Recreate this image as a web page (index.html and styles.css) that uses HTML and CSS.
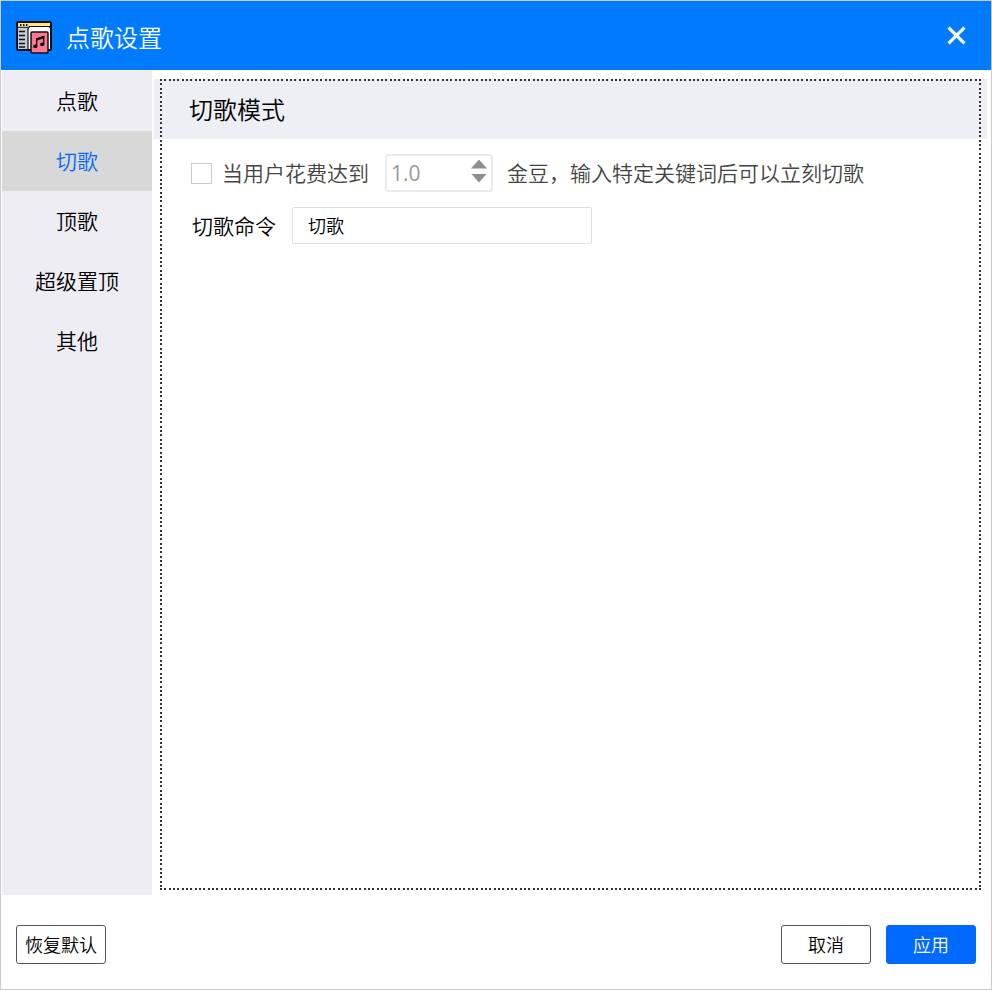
FILE: index.html
```html
<!DOCTYPE html>
<html lang="zh-CN">
<head>
<meta charset="utf-8">
<title>点歌设置</title>
<link rel="stylesheet" href="styles.css">
</head>
<body>
<div class="window">
  <header class="titlebar">
    <svg class="logo" viewBox="0 0 36 33" aria-hidden="true">
      <rect x="1" y="1" width="34" height="28" rx="1" fill="#fff" stroke="#111" stroke-width="2"/>
      <path d="M2 2h32v4H2z" fill="#ffe783"/>
      <path d="M2 6h10v22H2z" fill="#c6cbd9"/>
      <path d="M1 6.300h34" stroke="#111" stroke-width="1"/>
      <path d="M4 4h1.500M7 4h1.500M10 4h1.500" stroke="#111" stroke-width="2"/>
      <path d="M12 28V7.500l1.500-2.500H31l3 2.500V28z" fill="#fff"/>
      <path d="M12 28V8l1.500-2.500H34" fill="none" stroke="#111" stroke-width="1.200"/>
      <path d="M3 10.500h6M3 14.500h6M3 18.500h6M3 22.500h6M3 26h6" stroke="#111" stroke-width="1.300"/>
      <rect x="15" y="11" width="17" height="21" rx="1" fill="#ff7892" stroke="#111" stroke-width="1.500"/>
      <path d="M20.700 25v-7l7-2.500v7.500" fill="none" stroke="#111" stroke-width="1.300"/>
      <path d="M20 17.500l8.300-2.500v2.200l-8.300 2.500z" fill="#111"/>
      <ellipse cx="19.200" cy="25.300" rx="2.200" ry="1.900" fill="#111"/>
      <ellipse cx="26.200" cy="23.300" rx="2.200" ry="1.900" fill="#111"/>
    </svg>
    <h1 class="title">点歌设置</h1>
    <button class="close" type="button" aria-label="关闭">
      <svg viewBox="0 0 18 18" aria-hidden="true"><path d="M1.500 1.500l15 15M16.500 1.500l-15 15" fill="none" stroke="#fff" stroke-width="3"/></svg>
    </button>
  </header>
  <div class="main">
    <nav class="sidebar">
      <a class="tab" href="#song">点歌</a>
      <a class="tab active" href="#skip" aria-current="page">切歌</a>
      <a class="tab" href="#top">顶歌</a>
      <a class="tab" href="#super">超级置顶</a>
      <a class="tab" href="#other">其他</a>
    </nav>
    <section class="content">
      <div class="frame">
        <h2 class="heading">切歌模式</h2>
        <div class="fields">
          <div class="row disabled">
            <input class="check" type="checkbox" id="cost-on" disabled>
            <label class="check-label" for="cost-on">当用户花费达到</label>
            <div class="spinner">
              <input class="amount" type="text" value="1.0" aria-label="金豆数量" disabled>
              <div class="arrows">
                <button class="arrow up" type="button" aria-label="增加" disabled></button>
                <button class="arrow down" type="button" aria-label="减少" disabled></button>
              </div>
            </div>
            <span>金豆，输入特定关键词后可以立刻切歌</span>
          </div>
          <div class="row command">
            <label for="command">切歌命令</label>
            <input class="text" type="text" id="command" value="切歌">
          </div>
        </div>
      </div>
    </section>
  </div>
  <footer class="footer">
    <button class="btn reset" type="button">恢复默认</button>
    <button class="btn" type="button">取消</button>
    <button class="btn primary" type="button">应用</button>
  </footer>
</div>
</body>
</html>
```
FILE: styles.css
```css
* {
  box-sizing: border-box;
}

body {
  margin: 0;
  background: #fff;
  color: #000;
  font: 350 21px/28px "Noto Sans CJK SC", sans-serif;
}

input,
button {
  margin: 0;
  font-family: inherit;
  font-weight: inherit;
}

.window {
  display: flex;
  flex-direction: column;
  min-height: 100vh;
  border: 1px solid #ccc;
}

.titlebar {
  display: flex;
  align-items: center;
  height: 69px;
  padding: 4px 25px 0 15px;
  background: #007bff;
  color: #fff;
}

.logo {
  width: 36px;
  height: 33px;
}

.title {
  margin: 0 auto 0 14px;
  padding-bottom: 2px;
  font-size: 24px;
  font-weight: inherit;
  line-height: 36px;
}

.close {
  display: flex;
  padding: 0 0 4px;
  border: 0;
  background: none;
}

.close svg {
  width: 19px;
  height: 19px;
}

.main {
  display: flex;
  flex: 1;
  padding: 1px 4px 0 1px;
}

.sidebar {
  flex: none;
  width: 150px;
  background: #eeedf4;
}

.tab {
  display: block;
  height: 60px;
  color: #000;
  line-height: 58px;
  text-align: center;
  text-decoration: none;
}

.tab.active {
  background: #d8d8d8;
  color: #0069ff;
}

.content {
  flex: 1;
  display: flex;
  margin: 8px 0 5px 2px;
  padding: 0 6px;
  background: linear-gradient(#eeeff5, #eeeff5) no-repeat top / 100% 60px;
}

/* Dotted frame: three dots in each 13px tile, one strip for each side */
.frame {
  --dots: #333 0 2px, transparent 2px 4px, #333 4px 6px, transparent 6px 9px, #333 9px 11px, transparent 11px 13px;
  flex: 1;
  padding: 2px;
  background:
    linear-gradient(to right, var(--dots)) repeat-x top left / 13px 2px,
    linear-gradient(to right, var(--dots)) repeat-x bottom left / 13px 2px,
    linear-gradient(to bottom, var(--dots)) repeat-y top left / 2px 13px,
    linear-gradient(to bottom, var(--dots)) repeat-y top right / 2px 13px;
}

.heading {
  margin: 0;
  height: 58px;
  padding-left: 27px;
  font-size: 24px;
  font-weight: inherit;
  line-height: 56px;
}

.fields {
  padding: 15px 29px;
}

.row {
  display: flex;
  align-items: center;
}

.row label,
.row span {
  padding-bottom: 2px;
}

.disabled {
  color: #444;
}

.check {
  appearance: none;
  width: 21px;
  height: 21px;
  border: 1px solid #ccc;
  background: #fff;
}

.check-label {
  margin: 0 16px 0 10px;
}

.spinner {
  display: flex;
  align-items: center;
  width: 108px;
  height: 38px;
  margin-right: 14px;
  padding: 0 4px;
  border: 2px solid #e9ebf0;
  border-radius: 3px;
}

.amount {
  flex: 1;
  min-width: 0;
  padding: 0;
  border: 0;
  background: none;
  color: #999;
  font-family: "Open Sans", sans-serif;
  font-size: 21px;
  font-weight: 400;
}

.arrows {
  display: grid;
  gap: 5px;
  padding-bottom: 4px;
}

.arrow {
  width: 16px;
  height: 9px;
  padding: 0;
  border: 0;
  background: #8e8e8e;
}

.up {
  clip-path: polygon(50% 0, 100% 100%, 0 100%);
}

.down {
  clip-path: polygon(0 0, 100% 0, 50% 100%);
}

.command {
  margin: 15px 0 0 1px;
  gap: 16px;
}

.text {
  width: 300px;
  height: 37px;
  padding: 0 15px 2px;
  border: 1px solid #dedfe6;
  border-radius: 2px;
  background: #fff;
  color: #000;
  font-size: 18px;
}

.footer {
  display: flex;
  gap: 15px;
  padding: 30px 15px 25px;
}

.btn {
  width: 90px;
  height: 39px;
  padding: 0 0 2px;
  border: 1px solid #555;
  border-radius: 3px;
  background: #fff;
  color: #000;
  font-size: 18px;
}

.reset {
  margin-right: auto;
}

.primary {
  border-color: #0069ff;
  background: #0069ff;
  color: #fff;
}
```
